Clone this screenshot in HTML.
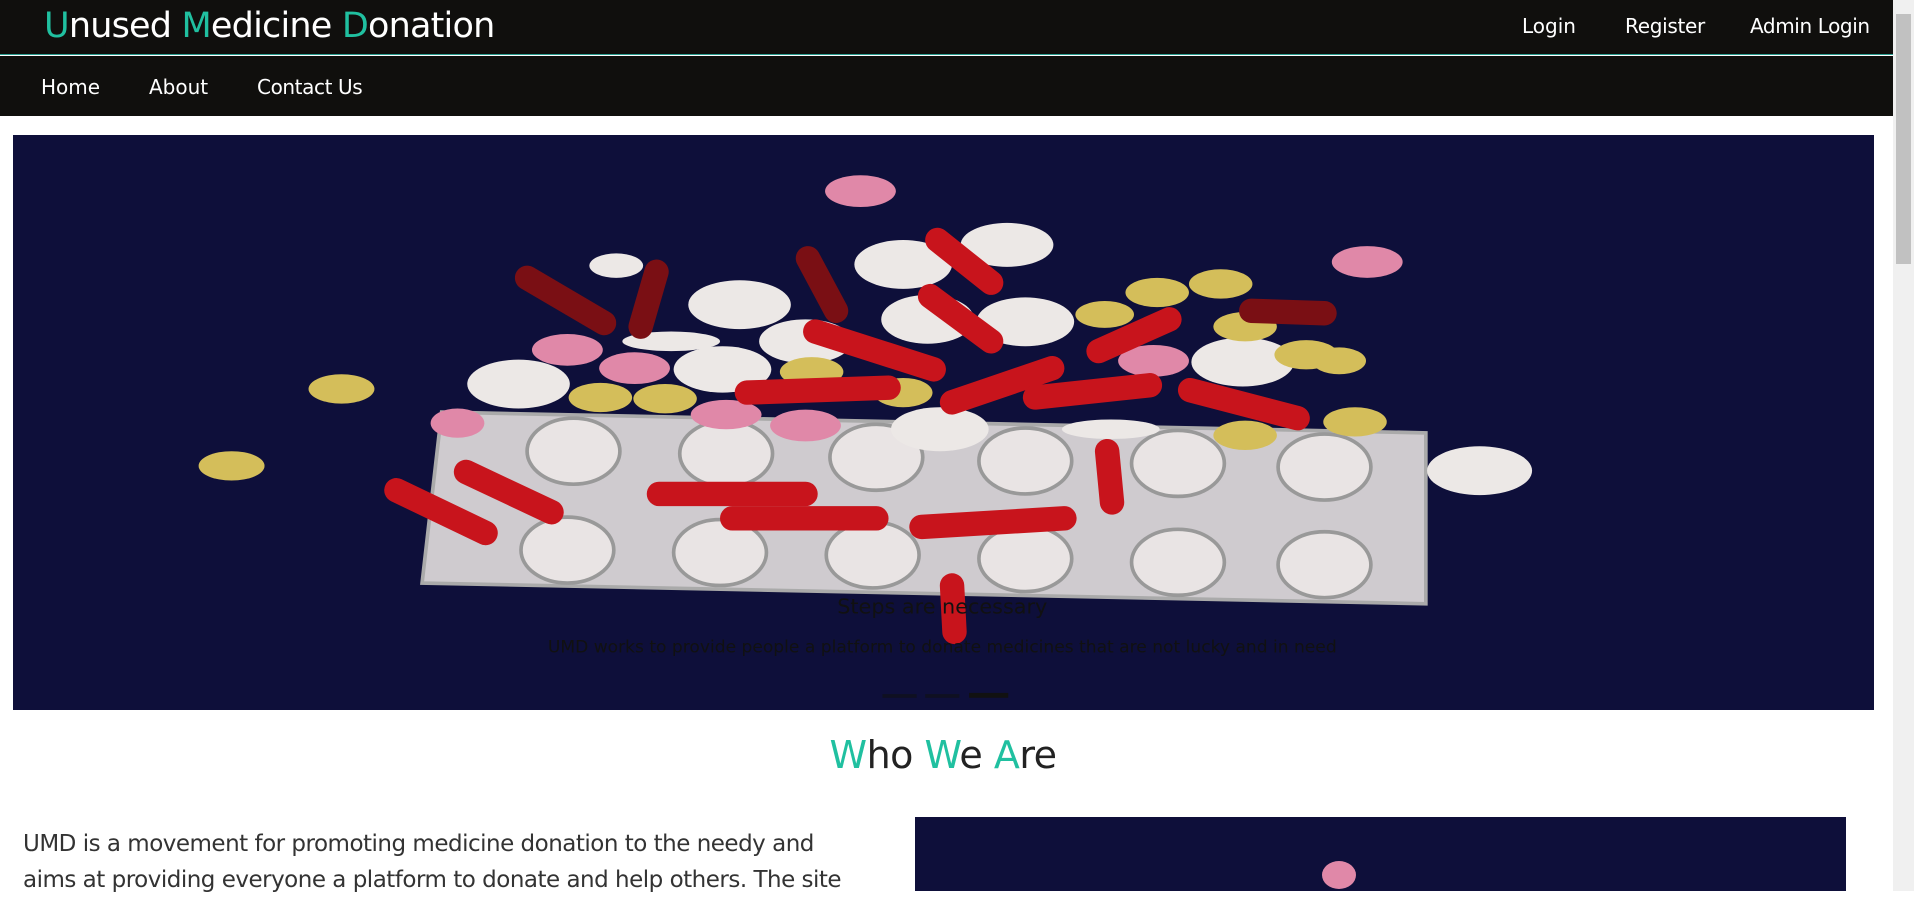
<!DOCTYPE html>
<html><head><meta charset="utf-8"><style>
*{margin:0;padding:0;box-sizing:border-box}
body{width:1914px;height:891px;overflow:hidden;background:#fff;font-family:"DejaVu Sans","Liberation Sans",sans-serif;position:relative}
.top{position:absolute;left:0;top:0;width:1893px;height:55px;background:#100f0d;border-bottom:1px solid #2a9d8f}
.nav{position:absolute;left:0;top:56px;width:1893px;height:60px;background:#100f0d}
.t{position:absolute;color:#fff;white-space:nowrap}
.g{color:#20c0a0}
.sb{position:absolute;right:0;top:0;width:21px;height:891px;background:#f0f0f0}
.sb div{position:absolute;left:3px;top:14px;width:15px;height:250px;background:#c1c1c1}
</style></head><body>
<div class="top"></div>
<div class="nav"></div>
<div class="t" style="left:44px;top:6px;font-size:35px;letter-spacing:-0.8px"><span class="g">U</span>nused <span class="g">M</span>edicine <span class="g">D</span>onation</div>
<div class="t" style="left:1522px;top:14px;font-size:20px">Login</div>
<div class="t" style="left:1625px;top:14px;font-size:20px;letter-spacing:-0.3px">Register</div>
<div class="t" style="left:1750px;top:14px;font-size:20px;letter-spacing:-0.4px">Admin Login</div>
<div class="t" style="left:41px;top:75px;font-size:20px">Home</div>
<div class="t" style="left:149px;top:75px;font-size:20px">About</div>
<div class="t" style="left:257px;top:75px;font-size:20px;letter-spacing:-0.4px">Contact Us</div>

<svg style="position:absolute;left:13px;top:135px" width="1861" height="575" viewBox="11 111 1524 471" preserveAspectRatio="none">
<rect x="11" y="111" width="1524" height="471" fill="#0e0f3a"/>
<polygon points="362,338 1168,355 1168,495 346,478" fill="#cfcbcf" stroke="#aaa" stroke-width="3"/>
<g fill="#e9e4e4" stroke="#999" stroke-width="3">
<ellipse cx="470" cy="370" rx="38" ry="27"/><ellipse cx="595" cy="372" rx="38" ry="27"/><ellipse cx="718" cy="375" rx="38" ry="27"/><ellipse cx="840" cy="378" rx="38" ry="27"/><ellipse cx="965" cy="380" rx="38" ry="27"/><ellipse cx="1085" cy="383" rx="38" ry="27"/>
<ellipse cx="465" cy="451" rx="38" ry="27"/><ellipse cx="590" cy="453" rx="38" ry="27"/><ellipse cx="715" cy="455" rx="38" ry="27"/><ellipse cx="840" cy="458" rx="38" ry="27"/><ellipse cx="965" cy="461" rx="38" ry="27"/><ellipse cx="1085" cy="463" rx="38" ry="27"/>
</g>
<g fill="#ece8e6">
<ellipse cx="425" cy="315" rx="42" ry="20"/><ellipse cx="606" cy="250" rx="42" ry="20"/><ellipse cx="740" cy="217" rx="40" ry="20"/><ellipse cx="825" cy="201" rx="38" ry="18"/><ellipse cx="840" cy="264" rx="40" ry="20"/><ellipse cx="760" cy="262" rx="38" ry="20"/><ellipse cx="1018" cy="297" rx="42" ry="20"/><ellipse cx="1212" cy="386" rx="43" ry="20"/><ellipse cx="505" cy="218" rx="22" ry="10"/><ellipse cx="592" cy="303" rx="40" ry="19"/><ellipse cx="660" cy="280" rx="38" ry="18"/><ellipse cx="770" cy="352" rx="40" ry="18"/><ellipse cx="550" cy="280" rx="40" ry="8"/><ellipse cx="910" cy="352" rx="40" ry="8"/>
</g>
<g fill="#e088a8">
<ellipse cx="705" cy="157" rx="29" ry="13"/><ellipse cx="1120" cy="215" rx="29" ry="13"/><ellipse cx="465" cy="287" rx="29" ry="13"/><ellipse cx="520" cy="302" rx="29" ry="13"/><ellipse cx="945" cy="296" rx="29" ry="13"/><ellipse cx="660" cy="349" rx="29" ry="13"/><ellipse cx="595" cy="340" rx="29" ry="12"/><ellipse cx="375" cy="347" rx="22" ry="12"/>
</g>
<g fill="#d4be5a">
<ellipse cx="280" cy="319" rx="27" ry="12"/><ellipse cx="190" cy="382" rx="27" ry="12"/><ellipse cx="948" cy="240" rx="26" ry="12"/><ellipse cx="1000" cy="233" rx="26" ry="12"/><ellipse cx="1020" cy="268" rx="26" ry="12"/><ellipse cx="1070" cy="291" rx="26" ry="12"/><ellipse cx="1097" cy="296" rx="22" ry="11"/><ellipse cx="1110" cy="346" rx="26" ry="12"/><ellipse cx="1020" cy="357" rx="26" ry="12"/><ellipse cx="492" cy="326" rx="26" ry="12"/><ellipse cx="545" cy="327" rx="26" ry="12"/><ellipse cx="665" cy="305" rx="26" ry="12"/><ellipse cx="740" cy="322" rx="24" ry="12"/><ellipse cx="905" cy="258" rx="24" ry="11"/>
</g>
<g stroke-linecap="round" fill="none">
<g stroke="#7a0f14" stroke-width="20"><line x1="432" y1="228" x2="495" y2="265"/><line x1="538" y1="223" x2="525" y2="268"/><line x1="662" y1="212" x2="685" y2="255"/><line x1="1025" y1="255" x2="1085" y2="257"/></g>
<g stroke="#c8141c" stroke-width="20"><line x1="768" y1="197" x2="812" y2="232"/><line x1="762" y1="243" x2="812" y2="280"/><line x1="668" y1="272" x2="765" y2="303"/><line x1="612" y1="322" x2="728" y2="318"/><line x1="780" y1="330" x2="862" y2="302"/><line x1="848" y1="326" x2="942" y2="316"/><line x1="900" y1="288" x2="958" y2="262"/><line x1="975" y1="320" x2="1063" y2="343"/><line x1="325" y1="402" x2="398" y2="437"/><line x1="382" y1="387" x2="452" y2="420"/><line x1="540" y1="405" x2="660" y2="405"/><line x1="600" y1="425" x2="718" y2="425"/><line x1="755" y1="432" x2="872" y2="425"/><line x1="907" y1="370" x2="911" y2="412"/><line x1="780" y1="480" x2="782" y2="518"/></g>
</g>
<text x="772" y="503" text-anchor="middle" font-size="17" fill="#111" font-family="DejaVu Sans,sans-serif">Steps are necessary</text>
<text x="772" y="535" text-anchor="middle" font-size="14" fill="#111" font-family="DejaVu Sans,sans-serif">UMD works to provide people a platform to donate medicines that are not lucky and in need</text>
<rect x="723" y="569" width="28" height="3" fill="#111" opacity=".6"/><rect x="758" y="569" width="28" height="3" fill="#111" opacity=".6"/><rect x="794" y="568" width="32" height="4" fill="#111"/>
</svg>

<div class="t" style="left:0;width:1886px;text-align:center;top:733px;font-size:38px;color:#222;letter-spacing:-0.5px"><span class="g">W</span>ho <span class="g">W</span>e <span class="g">A</span>re</div>
<div style="position:absolute;left:23px;top:826px;width:830px;font-size:23px;line-height:36px;color:#333;letter-spacing:-0.5px">UMD is a movement for promoting medicine donation to the needy and aims at providing everyone a platform to donate and help others. The site</div>
<svg style="position:absolute;left:915px;top:817px" width="931" height="74" viewBox="0 0 931 74"><rect width="931" height="74" fill="#0e0f3a"/><ellipse cx="424" cy="58" rx="17" ry="14" fill="#e088a8"/></svg>
<div class="sb"><div></div></div>
</body></html>
